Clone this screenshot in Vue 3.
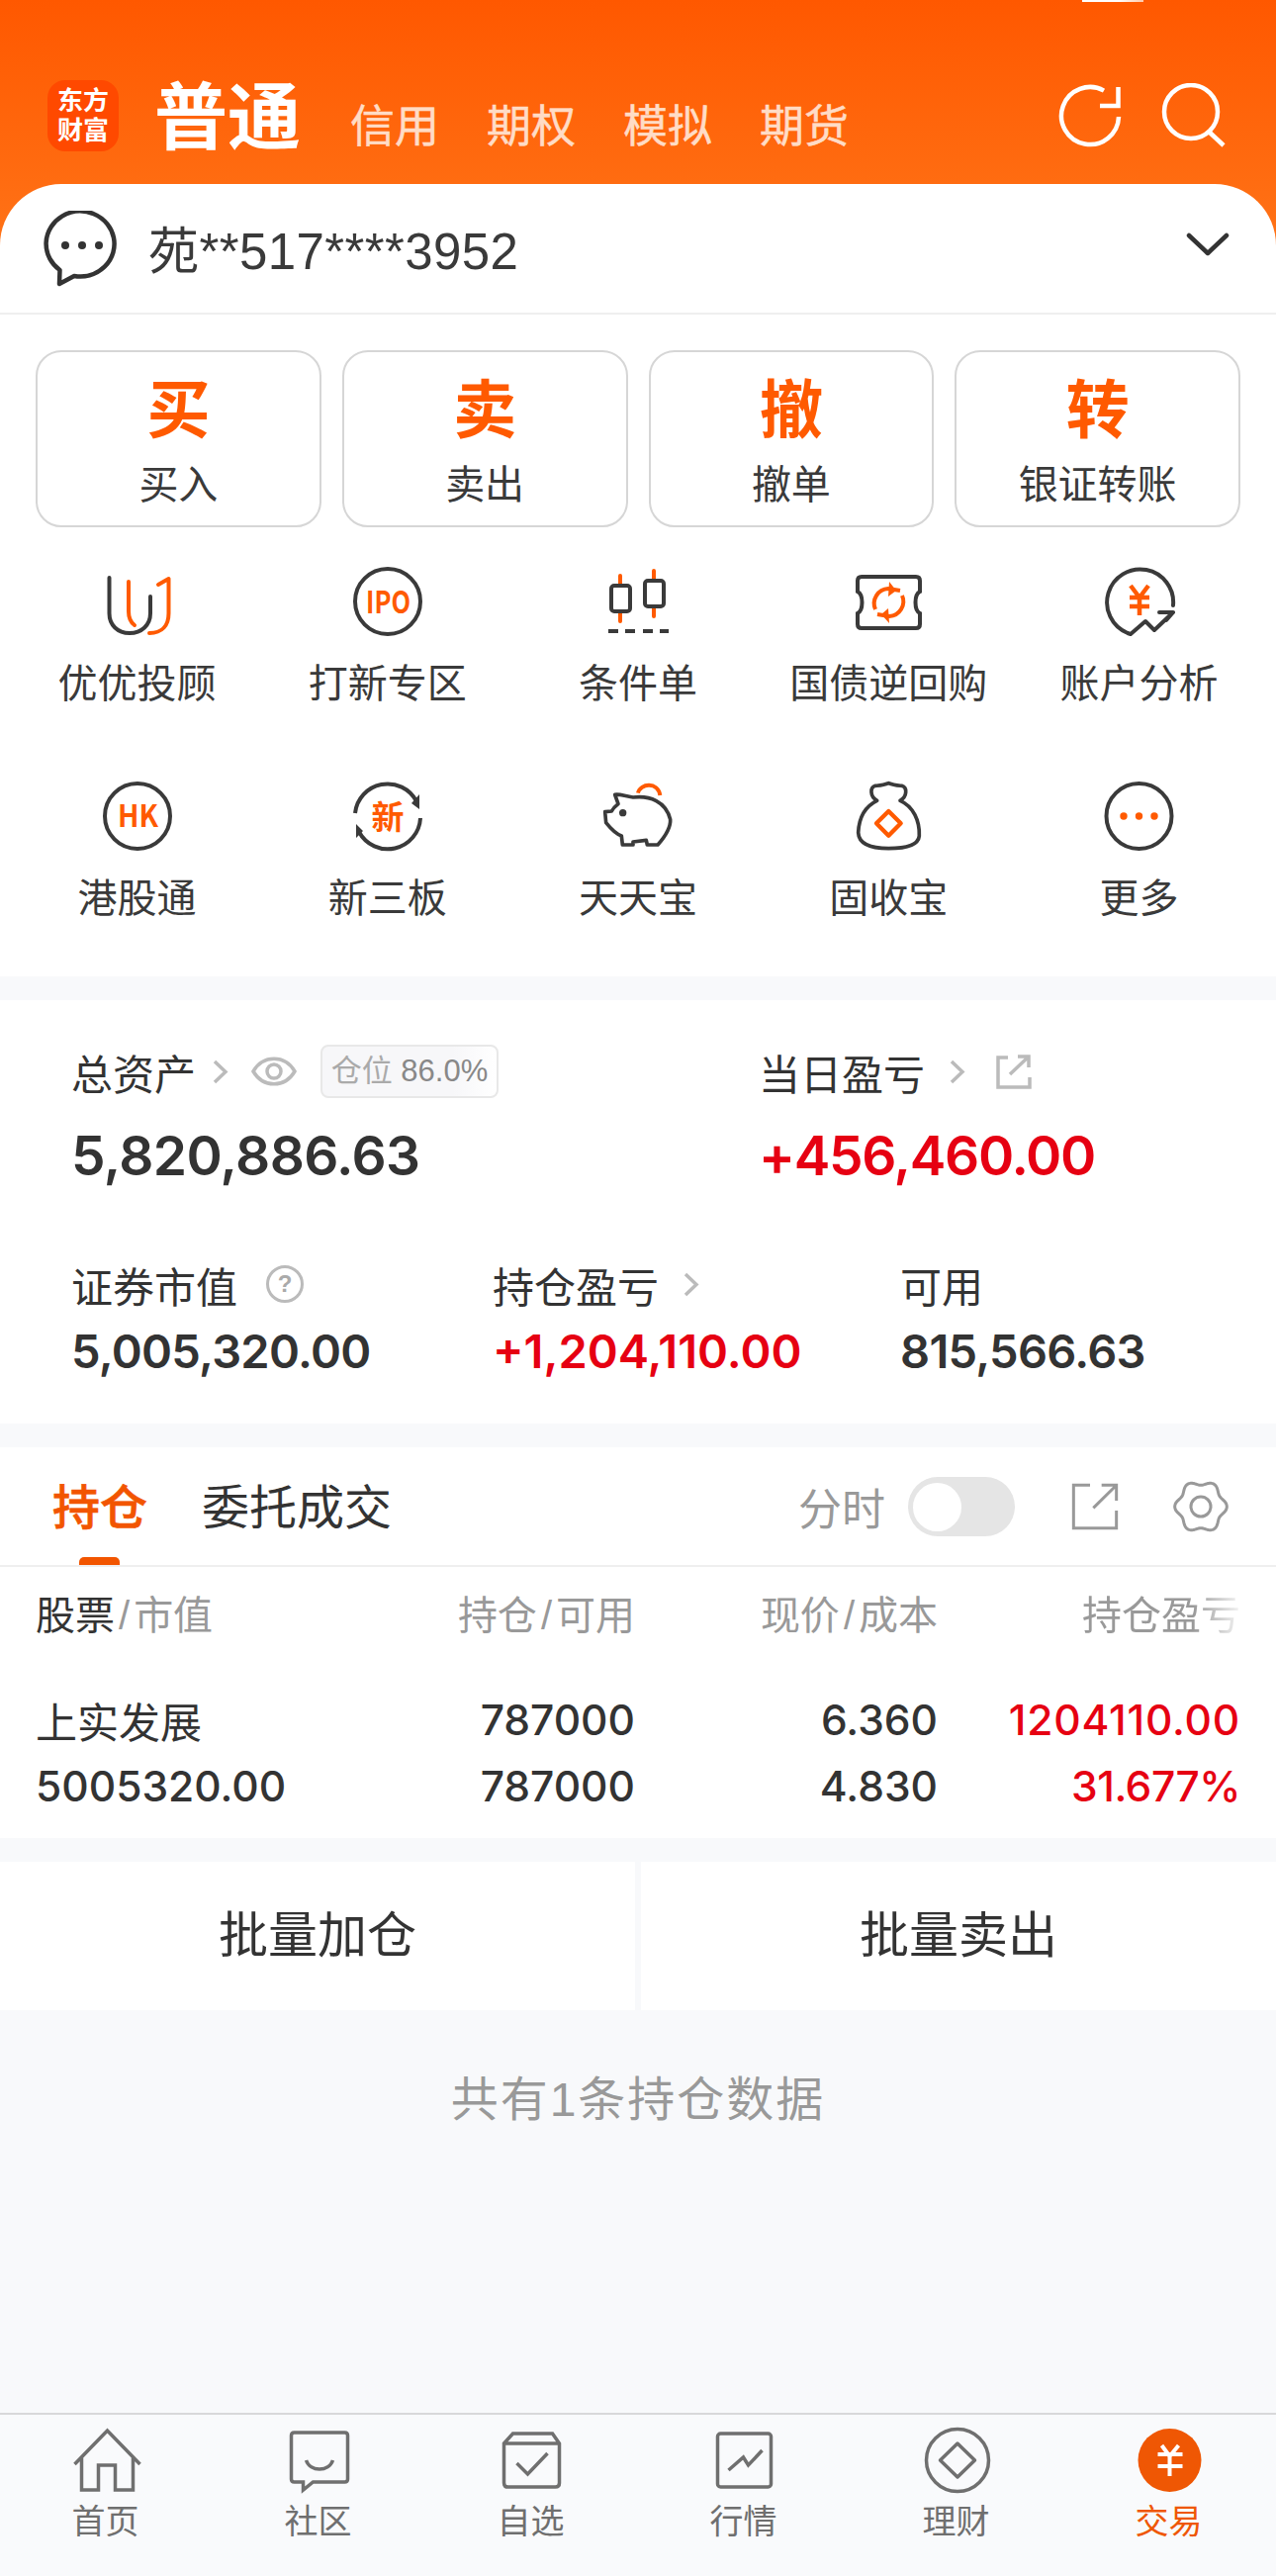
<script setup>
const gearPath = (() => {
  const pts = []
  for (let i = 0; i < 120; i++) {
    const a = (i / 120) * Math.PI * 2
    const r = 72 + 7 * Math.cos(6 * a)
    pts.push(`${(1305 + r * Math.cos(a)).toFixed(1)} ${(192 + r * Math.sin(a)).toFixed(1)}`)
  }
  return 'M' + pts.join('L') + 'Z'
})()
const modes = ['信用', '期权', '模拟', '期货']
const actions = [
  ['买', '买入'],
  ['卖', '卖出'],
  ['撤', '撤单'],
  ['转', '银证转账']
]
</script>

<template>
  <div class="page">
    <div class="hero">
      <div class="status-mark"></div>
      <div class="topbar">
        <div class="logo"><span>东方</span><span>财富</span></div>
        <div class="title">普通</div>
        <div class="modes">
          <span v-for="m in modes" :key="m">{{ m }}</span>
        </div>
        <svg class="top-icon" width="172" height="66" viewBox="1070 84 172 66" fill="none" stroke="#fff" stroke-width="4.5">
          <path d="M1131 118A29 29 0 1 1 1116 91.6" />
          <path d="M1130.5 88V107H1112" />
          <circle cx="1204" cy="113" r="27" />
          <path d="M1222 133L1237 147" />
        </svg>
      </div>
      <div class="account">
        <svg class="chat" width="80" height="78" viewBox="42 213 80 78" fill="none" stroke="#333" stroke-width="4.5">
          <path d="M58 287L58.5 273A34.5 33 0 1 1 73 279Z" stroke-linejoin="round" />
          <g fill="#333" stroke="none">
            <circle cx="64" cy="248" r="4" /><circle cx="81" cy="248" r="4" /><circle cx="98" cy="248" r="4" />
          </g>
        </svg>
        <span class="acct-text">苑**517****3952</span>
        <svg class="acct-chev" width="44" height="26" viewBox="1199 238 44 26" fill="none" stroke="#333" stroke-width="4.5" stroke-linecap="round" stroke-linejoin="round">
          <path d="M1202 242L1221 260L1240 242" />
        </svg>
      </div>
    </div>

    <section class="trade">
      <div class="actions">
        <div v-for="a in actions" :key="a[0]" class="action">
          <div class="action-big">{{ a[0] }}</div>
          <div class="action-sub">{{ a[1] }}</div>
        </div>
      </div>

      <div class="menu">
        <div class="cell">
          <svg width="80" height="72" viewBox="99 572 80 72" fill="none" stroke-width="4" stroke-linecap="round" stroke-linejoin="round">
            <path stroke="#3a3a3a" d="M110.5 584V620C110.5 632 119 640 131 640C143 640 152 632 152 620V603" />
            <path stroke="#ff5a00" d="M130 588V618C130 624 132 629 136 632" />
            <path stroke="#ff5a00" d="M160 591L170.500 585V620C170.500 632 164 640 151 640" />
          </svg>
          <span>优优投顾</span>
        </div>
        <div class="cell">
          <svg width="80" height="72" viewBox="352 572 80 72" fill="none">
            <circle cx="392" cy="608" r="33" stroke="#3a3a3a" stroke-width="4" />
            <text x="392.5" y="620" text-anchor="middle" class="svg-t" font-size="31" textLength="45" lengthAdjust="spacingAndGlyphs">IPO</text>
          </svg>
          <span>打新专区</span>
        </div>
        <div class="cell">
          <svg width="80" height="72" viewBox="605 572 80 72" fill="none" stroke-width="4">
            <g stroke="#ff5a00" stroke-linecap="round">
              <path d="M627 582V628M661 577V623" />
            </g>
            <rect x="618" y="592" width="19" height="26" rx="3" fill="#fff" stroke="#3a3a3a" />
            <rect x="652" y="587" width="19" height="26" rx="3" fill="#fff" stroke="#3a3a3a" />
            <path d="M615 638H625M632 638H642M650 638H660M667 638H676" stroke="#3a3a3a" />
          </svg>
          <span>条件单</span>
        </div>
        <div class="cell">
          <svg width="80" height="72" viewBox="858 572 80 72" fill="none">
            <path d="M871 583H926Q930 583 930 587V598C924 601 924 617 930 620V631Q930 635 926 635H871Q867 635 867 631V620C873 617 873 601 867 598V587Q867 583 871 583Z" stroke="#3a3a3a" stroke-width="4" />
            <path d="M885 616A15 15 0 0 1 898 595L910 597M912 602A15 15 0 0 1 899 623L887 621" stroke="#ff5a00" stroke-width="4" />
            <path d="M899 588L906 597L898 603ZM898 615L891 621L899 630Z" fill="#ff5a00" />
          </svg>
          <span>国债逆回购</span>
        </div>
        <div class="cell">
          <svg width="80" height="72" viewBox="1111 572 80 72" fill="none" stroke-linecap="round" stroke-linejoin="round">
            <path d="M1186 612A33.500 33.500 0 1 0 1140 640L1143 641L1158 628L1167 637L1186 619H1172M1186 619L1179 627" stroke="#3a3a3a" stroke-width="4" />
            <path d="M1143 592L1152 604L1161 592M1152 604V622M1142 604H1162M1142 613H1162" stroke="#ff5a00" stroke-width="4.500" stroke-linecap="butt" />
          </svg>
          <span>账户分析</span>
        </div>

        <div class="cell">
          <svg width="80" height="72" viewBox="99 789 80 72" fill="none">
            <circle cx="139" cy="825" r="33" stroke="#3a3a3a" stroke-width="4" />
            <text x="139.5" y="836" text-anchor="middle" class="svg-t" font-size="31" textLength="41" lengthAdjust="spacingAndGlyphs">HK</text>
          </svg>
          <span>港股通</span>
        </div>
        <div class="cell">
          <svg width="80" height="72" viewBox="352 789 80 72" fill="none">
            <path d="M359 822A33 33 0 0 1 421 810M425 827A33 33 0 0 1 363 841" stroke="#3a3a3a" stroke-width="4" />
            <path d="M424 803V818L416 812ZM360 847V833L367 840Z" fill="#3a3a3a" />
            <text x="392" y="838" text-anchor="middle" class="svg-t" font-size="33">新</text>
          </svg>
          <span>新三板</span>
        </div>
        <div class="cell">
          <svg width="80" height="72" viewBox="605 789 80 72" fill="none">
            <g transform="translate(590 770) scale(.3333)">
              <path d="M95 100C110 97 125 105 150 108C200 102 250 120 263 175C265 205 240 235 225 252H193L190 238L150 243V252H118L115 225C100 220 80 200 68 185L65 152L85 150C90 140 100 132 105 128Z" stroke="#3a3a3a" stroke-width="11" stroke-linejoin="round" />
              <path d="M165 95C172 65 225 60 232 102" stroke="#ff5a00" stroke-width="12" />
              <circle cx="119" cy="155" r="11" fill="#3a3a3a" />
            </g>
          </svg>
          <span>天天宝</span>
        </div>
        <div class="cell">
          <svg width="80" height="72" viewBox="858 789 80 72" fill="none">
            <g transform="translate(840 770) scale(.3333)">
              <path d="M140 118C118 105 118 78 135 73C150 72 160 72 175 65C190 72 200 72 215 73C232 78 232 105 210 118C250 135 270 180 268 225C265 255 220 263 175 263C130 263 85 255 83 215C85 170 105 135 140 118Z" stroke="#3a3a3a" stroke-width="11" stroke-linejoin="round" />
              <path d="M175 150L212 187L175 224L138 187Z" stroke="#ff5a00" stroke-width="13" stroke-linejoin="round" />
            </g>
          </svg>
          <span>固收宝</span>
        </div>
        <div class="cell">
          <svg width="80" height="72" viewBox="1111 789 80 72" fill="none">
            <circle cx="1151.500" cy="825" r="33" stroke="#3a3a3a" stroke-width="4" />
            <g fill="#ff5a00">
              <circle cx="1136" cy="825" r="3.700" /><circle cx="1151.500" cy="825" r="3.700" /><circle cx="1167" cy="825" r="3.700" />
            </g>
          </svg>
          <span>更多</span>
        </div>
      </div>
    </section>

    <section class="assets">
      <div class="assets-top">
        <div class="asset-main">
          <div class="asset-label">
            <span>总资产</span>
            <svg class="chev" width="16" height="25" viewBox="0 0 16 25" fill="none"><path d="M2 2L13 12.500L2 23" /></svg>
            <svg class="eye" width="46" height="32" viewBox="0 0 46 32" fill="none">
              <path d="M2 16C12 -1 34 -1 44 16C34 33 12 33 2 16Z" />
              <circle cx="23" cy="16" r="7" />
            </svg>
            <span class="badge"><em>仓位</em> 86.0%</span>
          </div>
          <div class="num-big">5,820,886.63</div>
        </div>
        <div class="asset-main">
          <div class="asset-label">
            <span>当日盈亏</span>
            <svg class="chev wide" width="16" height="25" viewBox="0 0 16 25" fill="none"><path d="M2 2L13 12.500L2 23" /></svg>
            <svg class="share-sm" width="36" height="36" viewBox="0 0 36 36" fill="none">
              <path d="M12 4H2V34H34V24M14 21L33 3M22 3H33V14" />
            </svg>
          </div>
          <div class="num-big red tight">+456,460.00</div>
        </div>
      </div>
      <div class="assets-bottom">
        <div>
          <div class="asset-label">
            <span>证券市值</span>
            <svg class="qmark" width="40" height="40" viewBox="0 0 40 40" fill="none">
              <circle cx="20" cy="20" r="17.500" />
              <text x="20" y="28" text-anchor="middle" class="q-t">?</text>
            </svg>
          </div>
          <div class="num-mid">5,005,320.00</div>
        </div>
        <div>
          <div class="asset-label">
            <span>持仓盈亏</span>
            <svg class="chev wide" width="16" height="25" viewBox="0 0 16 25" fill="none"><path d="M2 2L13 12.500L2 23" /></svg>
          </div>
          <div class="num-mid red ones">+1,204,110.00</div>
        </div>
        <div>
          <div class="asset-label"><span>可用</span></div>
          <div class="num-mid">815,566.63</div>
        </div>
      </div>
    </section>

    <section class="positions">
      <div class="tabs">
        <div class="tab active">持仓</div>
        <div class="tab">委托成交</div>
        <div class="tab-tools">
          <span class="tool-text">分时</span>
          <span class="toggle"><i></i></span>
          <svg class="tool" width="50" height="50" viewBox="905 118 150 150" fill="none" stroke="#999" stroke-width="9">
            <path d="M965 128H915V258H1045V205M975 197L1043 130M1000 128H1045V175" />
          </svg>
          <svg class="tool" width="60" height="60" viewBox="1215 102 180 180" fill="none" stroke="#999" stroke-width="9">
            <path :d="gearPath" stroke-linejoin="round" />
            <circle cx="1305" cy="192" r="30" />
          </svg>
        </div>
      </div>
      <div class="table-row head">
        <div class="left"><b>股票</b><i>/</i>市值</div>
        <div>持仓<i>/</i>可用</div>
        <div>现价<i>/</i>成本</div>
        <div><span class="fade">持仓盈亏</span></div>
      </div>
      <div class="table-row data">
        <div class="left name">上实发展</div>
        <div>787000</div>
        <div>6.360</div>
        <div class="red spread">1204110.00</div>
        <div class="left">5005320.00</div>
        <div>787000</div>
        <div>4.830</div>
        <div class="red narrow">31.677%</div>
      </div>
    </section>

    <section class="batch">
      <div>批量加仓</div>
      <div>批量卖出</div>
    </section>

    <div class="summary">共有1条持仓数据</div>

    <nav class="nav">
      <div class="nav-item">
        <svg width="72" height="72" viewBox="71.500 2451 72 72" fill="none">
          <path d="M75 2491L108 2457L141 2491M82 2484V2517H99V2492H116V2517H134V2484" />
        </svg>
        <span>首页</span>
      </div>
      <div class="nav-item">
        <svg width="72" height="72" viewBox="286.500 2451 72 72" fill="none">
          <path d="M297 2459H348Q351 2459 351 2462V2506Q351 2509 348 2509H316L306 2517V2509H297Q294 2509 294 2506V2462Q294 2459 297 2459Z" />
          <path d="M309 2487C313 2499 332 2499 336 2487" />
        </svg>
        <span>社区</span>
      </div>
      <div class="nav-item">
        <svg width="72" height="72" viewBox="501.500 2451 72 72" fill="none">
          <path d="M518 2460H558L565 2470V2510Q565 2514 561 2514H513Q509 2514 509 2510V2470ZM509 2470H565M522 2490L533 2501L553 2480" />
        </svg>
        <span>自选</span>
      </div>
      <div class="nav-item">
        <svg width="72" height="72" viewBox="716.500 2451 72 72" fill="none">
          <rect x="725" y="2460" width="54" height="54" rx="3" />
          <path d="M736 2497L751 2484L756 2492L770 2477" />
        </svg>
        <span>行情</span>
      </div>
      <div class="nav-item">
        <svg width="72" height="72" viewBox="931.500 2451 72 72" fill="none">
          <circle cx="967.500" cy="2487" r="31.500" />
          <path d="M967.500 2470L985 2487L967.500 2504L950 2487Z" stroke-linejoin="round" />
        </svg>
        <span>理财</span>
      </div>
      <div class="nav-item on">
        <svg width="72" height="72" viewBox="1146.500 2451 72 72">
          <circle cx="1182" cy="2487" r="32" fill="#ef5704" />
          <path d="M1174 2472L1182 2483L1191 2472M1182 2483V2503M1170 2481H1195M1170 2493H1195" fill="none" stroke="#fff" />
        </svg>
        <span>交易</span>
      </div>
    </nav>
  </div>
</template>

<style>
html, body { margin: 0; background: #f8f9fb; }
</style>

<style scoped>
.page {
  width: 1290px;
  min-height: 2604px;
  display: flex;
  flex-direction: column;
  background: #f8f9fb;
  font-family: "Liberation Sans", "Noto Sans CJK SC", sans-serif;
  color: #333;
}
.hero {
  position: relative;
  background: linear-gradient(#ff5800 0, #ff7418 260px);
}
.status-mark {
  position: absolute;
  left: 1094px;
  top: 0;
  width: 62px;
  height: 2px;
  background: linear-gradient(90deg, #fff 60%, #ffc9aa);
}
.topbar {
  height: 186px;
  box-sizing: border-box;
  padding: 81px 0 0 48px;
  display: flex;
  align-items: flex-start;
}
.logo {
  width: 72px;
  height: 72px;
  border-radius: 18px;
  background: #ff4900;
  color: #fff;
  font-size: 26px;
  line-height: 30px;
  font-weight: 700;
  display: flex;
  flex-direction: column;
  align-items: center;
  justify-content: center;
}
.title {
  margin-left: 36px;
  margin-top: -20px;
  font-size: 74px;
  line-height: 104px;
  font-weight: 700;
  color: #fff;
  font-family: "Noto Sans CJK SC", sans-serif;
}
.modes {
  margin-left: 50px;
  margin-top: 18px;
  display: flex;
  gap: 48px;
  font-size: 45px;
  line-height: 60px;
  color: #ffdcc6;
  -webkit-text-stroke: 0.5px #ffdcc6;
}
.top-icon {
  margin-left: auto;
  margin-right: 48px;
  margin-top: 3px;
}
.account {
  height: 130px;
  background: #fff;
  border-radius: 62px 62px 0 0;
  border-bottom: 2px solid #efefef;
  display: flex;
  align-items: center;
  padding: 0 47px 0 44px;
}
.chat { margin-top: 1px; }
.acct-text {
  margin-left: 26px;
  margin-top: -3px;
  font-size: 51px;
  letter-spacing: 0.4px;
  color: #3a3a3a;
}
.acct-chev { margin-left: auto; margin-top: -8px; }

.trade { background: #fff; }
.actions {
  display: flex;
  gap: 21px;
  padding: 36px 36px 0;
}
.action {
  flex: 1;
  height: 179px;
  box-sizing: border-box;
  border: 2px solid #d6d6d6;
  border-radius: 26px;
  padding-top: 21px;
  text-align: center;
}
.action-big {
  font-size: 64px;
  line-height: 76px;
  font-weight: 700;
  color: #ff5a00;
}
.action-sub {
  margin-top: 9px;
  font-size: 40px;
  line-height: 56px;
  color: #3a3a3a;
}
.menu {
  display: grid;
  grid-template-columns: repeat(5, 1fr);
  padding: 39px 12px 51px;
  row-gap: 70px;
}
.cell {
  display: flex;
  flex-direction: column;
  align-items: center;
  font-size: 40px;
  line-height: 56px;
  color: #3a3a3a;
}
.cell span { margin-top: 19px; }
.svg-t {
  fill: #ff5a00;
  font-weight: 700;
  font-family: "Noto Sans CJK SC", "Liberation Sans", sans-serif;
}

.assets {
  margin-top: 24px;
  background: #fff;
  padding: 42px 0 38px 72px;
}
.assets-top { display: flex; }
.asset-main:first-child { width: 695px; }
.asset-label {
  display: flex;
  align-items: center;
  height: 60px;
  font-size: 42px;
}
.chev { margin-left: 17px; }
.chev.wide { margin-left: 25px; }
.chev path, .eye *, .share-sm path {
  stroke: #bbb;
  stroke-width: 3.5;
}
.eye { margin-left: 23px; }
.share-sm { margin-left: 31px; }
.badge {
  margin-left: 24px;
  box-sizing: border-box;
  width: 180px;
  height: 54px;
  line-height: 50px;
  border: 2px solid #e8e8e8;
  border-radius: 8px;
  background: linear-gradient(90deg, #f7f7f9 75%, #fff);
  font-size: 31px;
  color: #888;
  text-align: center;
  white-space: nowrap;
}
.badge em { font-style: normal; color: #aaa; }
.num-big {
  margin-top: 20px;
  height: 70px;
  line-height: 70px;
  font-family: Inter, "Liberation Sans", sans-serif;
  font-weight: 600;
  font-size: 55px;
  letter-spacing: -0.6px;
}
.num-big.tight { letter-spacing: -1.3px; }
.red { color: #e60012; }
.assets-bottom {
  margin-top: 65px;
  display: grid;
  grid-template-columns: 426px 412px 1fr;
}
.num-mid {
  margin-top: 3px;
  height: 70px;
  line-height: 70px;
  font-family: Inter, "Liberation Sans", sans-serif;
  font-weight: 600;
  font-size: 47px;
  letter-spacing: -0.7px;
}
.num-mid.ones { letter-spacing: 0; }
.qmark { margin-left: 28px; }
.qmark circle { stroke: #bbb; stroke-width: 3; }
.q-t { fill: #aaa; font-size: 24px; font-weight: 700; }

.positions {
  margin-top: 24px;
  background: #fff;
}
.tabs {
  height: 121px;
  box-sizing: border-box;
  border-bottom: 2px solid #efefef;
  display: flex;
  align-items: flex-start;
  padding: 27px 46px 0 53px;
}
.tab {
  font-size: 48px;
  line-height: 70px;
  margin-right: 55px;
}
.tab.active {
  position: relative;
  height: 92px;
  color: #f25500;
  font-weight: 500;
  -webkit-text-stroke: 0.6px #f25500;
}
.tab.active::after {
  content: "";
  position: absolute;
  left: 27px;
  bottom: 0;
  width: 41px;
  height: 8px;
  border-radius: 5px 5px 0 0;
  background: #f25500;
}
.tab-tools {
  margin-left: auto;
  margin-top: -2px;
  display: flex;
  align-items: center;
  height: 70px;
}
.tool-text { font-size: 44px; color: #999; }
.toggle {
  margin-left: 23px;
  width: 108px;
  height: 60px;
  border-radius: 30px;
  background: #e5e5e5;
  display: flex;
  align-items: center;
  padding-left: 5px;
  box-sizing: border-box;
}
.toggle i {
  width: 49px;
  height: 49px;
  border-radius: 50%;
  background: #fff;
}
.tool { margin-left: 56px; }
.tool + .tool { margin-left: 52px; }
.table-row {
  display: grid;
  grid-template-columns: 290px 316px 306px 306px;
  padding: 0 36px;
  text-align: right;
}
.table-row .left { text-align: left; }
.head {
  padding-top: 24px;
  font-size: 40px;
  line-height: 50px;
  color: #999;
}
.head b { font-weight: 400; color: #333; }
.head i {
  font-style: normal;
  margin: 0 4px;
}
.fade {
  -webkit-mask-image: linear-gradient(90deg, #000 70%, rgba(0,0,0,.1));
  mask-image: linear-gradient(90deg, #000 70%, rgba(0,0,0,.1));
}
.data {
  padding-top: 47px;
  padding-bottom: 19px;
  font-family: Inter, "Liberation Sans", "Noto Sans CJK SC", sans-serif;
  font-weight: 500;
  font-size: 42.5px;
  line-height: 67px;
}
.data .spread { letter-spacing: 0.8px; }
.data .narrow { letter-spacing: -0.5px; }
.data .name {
  font-family: "Noto Sans CJK SC", sans-serif;
  font-size: 42px;
  font-weight: 400;
}
.batch {
  margin-top: 24px;
  display: flex;
  gap: 6px;
}
.batch div {
  flex: 1;
  height: 150px;
  background: #fff;
  font-size: 50px;
  line-height: 150px;
  text-align: center;
}
.summary {
  flex: 1;
  padding-top: 58px;
  text-align: center;
  font-size: 48px;
  letter-spacing: 2px;
  line-height: 66px;
  color: #999;
}
.nav {
  height: 165px;
  box-sizing: border-box;
  border-top: 2px solid #d8d8da;
  background: #f9fafc;
  display: flex;
  padding-top: 10px;
}
.nav-item {
  flex: 1;
  display: flex;
  flex-direction: column;
  align-items: center;
  font-size: 34px;
  line-height: 50px;
  color: #6f6f6f;
}
.nav-item span { margin-top: 1px; margin-right: 2px; }
.nav-item svg * { stroke: #6f6f6f; stroke-width: 3.5; }
.nav-item.on { color: #ef5704; }
.nav-item.on svg circle { stroke: none; }
.nav-item.on svg path { stroke: #fff; stroke-width: 4; }
</style>
